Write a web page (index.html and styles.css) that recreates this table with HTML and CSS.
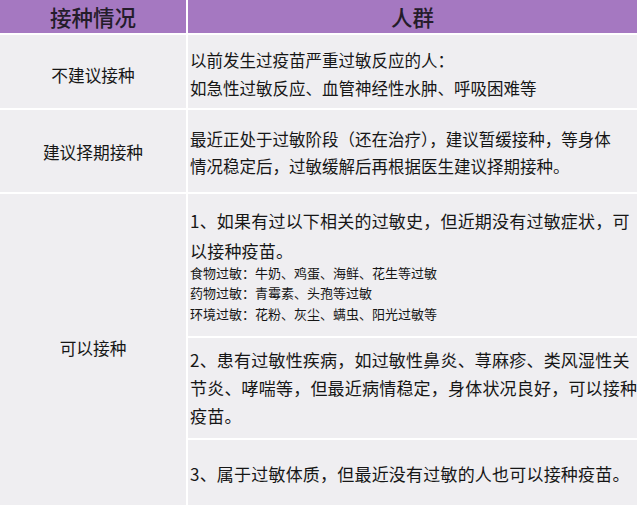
FILE: index.html
```html
<!DOCTYPE html>
<html lang="zh-CN">
<head>
<meta charset="utf-8">
<link rel="stylesheet" href="styles.css">
</head>
<body>
<div class="table">
  <div class="head">接种情况</div>
  <div class="head">人群</div>

  <div class="label r1">不建议接种</div>
  <div class="cell r1 t16">以前发生过疫苗严重过敏反应的人：<br>如急性过敏反应、血管神经性水肿、呼吸困难等</div>

  <div class="label r2">建议择期接种</div>
  <div class="cell r2 t16">最近正处于过敏阶段（还在治疗），建议暂缓接种，等身体<br>情况稳定后，过敏缓解后再根据医生建议择期接种。</div>

  <div class="label r3">可以接种</div>
  <div class="stack">
    <div class="cell s1">
      <div class="big">1、如果有过以下相关的过敏史，但近期没有过敏症状，可<br>以接种疫苗。</div>
      <div class="small">食物过敏：牛奶、鸡蛋、海鲜、花生等过敏<br>药物过敏：青霉素、头孢等过敏<br>环境过敏：花粉、灰尘、螨虫、阳光过敏等</div>
    </div>
    <div class="cell s2 big">2、患有过敏性疾病，如过敏性鼻炎、荨麻疹、类风湿性关<br>节炎、哮喘等，但最近病情稳定，身体状况良好，可以接种<br>疫苗。</div>
    <div class="cell s3 big">3、属于过敏体质，但最近没有过敏的人也可以接种疫苗。</div>
  </div>
</div>
</body>
</html>
```

FILE: styles.css
```css
html, body {
  margin: 0;
  padding: 0;
  background: #ffffff;
}
body {
  width: 640px;
  height: 507px;
  overflow: hidden;
  font-family: "Noto Sans CJK SC", "Noto Sans", sans-serif;
  color: #161616;
}
.table {
  width: 635px;
  display: grid;
  grid-template-columns: 186px 1fr;
  grid-template-rows: 33px 73px 82px 311px;
  gap: 2px;
  background: #ffffff;
}
.head {
  background: #a578c1;
  color: #241c2a;
  font-size: 21.5px;
  font-weight: 500;
  display: flex;
  align-items: center;
  justify-content: center;
  line-height: 1;
}
.label {
  background: #efeef1;
  display: flex;
  align-items: center;
  justify-content: center;
  font-size: 16.7px;
}
.label.r1 { padding-top: 6px; }
.label.r2 { padding-top: 2px; }
.label.r3 { padding-bottom: 4px; }
.cell {
  background: #efeef1;
  padding-left: 2px;
  display: flex;
  flex-direction: column;
  justify-content: center;
  white-space: nowrap;
}
.t16 {
  font-size: 16.5px;
}
.cell.r1 { line-height: 28px; padding-top: 5px; }
.cell.r2 { line-height: 27px; padding-top: 3px; }
.stack {
  display: grid;
  grid-template-rows: 142px 100px 65px;
  gap: 2px;
  background: #ffffff;
}
.big {
  font-size: 17px;
  letter-spacing: 0.2px;
  line-height: 30px;
}
.s2.big { line-height: 28px; }
.small {
  font-size: 13px;
  line-height: 20.5px;
  margin-top: -3px;
}
.s3 { padding-top: 2px; }
```
